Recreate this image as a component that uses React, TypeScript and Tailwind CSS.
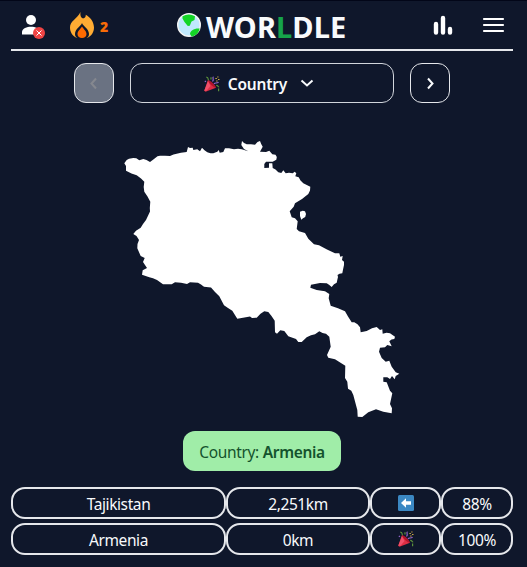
const ARMENIA =
  "M124.3 163.3L126.7 160 129 158.700 133.3 158 136.300 158.300 139.3 160.3 143.3 159 146.500 160 150 162 154 159 157.500 156.200 160 155.7 165 155.700 170 156 173.500 154.500 176.7 153.7 181 152.700 186.7 152 188 147 190 148 192.7 147.7 193.3 150 197.3 149.3 200 151.3 202 147.7 204.500 150.300 207.3 152.3 210.500 153.300 213.3 153.3 217.3 151.7 218.7 150 219.7 152.7 223.3 152 225 148.3 229 148.300 234 149.3 238 148.800 241.7 149.3 248.3 151.3 244 149 241.3 145 242 141 244 143 246.7 144.3 251 144.300 255 144.7 257.500 142 260 141 261.200 144 262.7 146.7 260 151.7 266 152 269.3 150.7 272.3 154.3 275.500 154.700 276.800 157 276.3 159.7 272.7 161.7 266 161.7 264.3 164 264.3 168 269 167.7 269 163.3 272.3 163.3 272.7 168 275.500 169.500 278.3 172.3 281.3 173 283.3 170.3 285.7 173.3 289 172.800 292.7 173.3 294.7 171.7 296.3 173.3 295.3 176.3 298.7 177.3 300.500 180.500 303.3 183.3 310.3 186.7 310 190.500 308.3 194 302 199 295 203.3 293.7 206.7 289.7 211.3 291.7 217.3 295 218.3 297.7 221.3 296.7 229 299 231.3 305 233 308.3 238.7 314 244.3 319 245.3 327 249.500 335 253.3 339.3 253.3 340.3 256.7 342.7 256 342 260 344 261.7 344 265 343.3 268.3 342.3 273.3 339.500 273.700 337.5 275 338 277 337.500 279 336.7 282.7 334 284.200 331.7 287 329 284.800 326.7 283.3 320 283 311 284.7 310.3 287.7 316.7 290 325 291.3 329.3 294 328.7 298.3 330.7 305.7 338 308.300 345 311.3 348 316.500 351.7 322.3 354.3 322.3 357.500 324.300 360 327.3 360.7 332.3 366.7 331 372 328.300 376.7 327 380 330 382.3 329.3 382.7 333.7 386.500 332.700 390 333.3 395 336.7 394.3 339 391.500 339.500 389.3 341.3 391.7 346.3 387.3 345 385 347.3 380 347.7 379 351.7 381.7 358 385.7 361.7 389.3 360.7 391.7 366.7 395.7 372.3 399.3 373.7 395.7 376 394.7 379.3 392 376 390 379 387.3 377.3 383.3 377.3 383.3 381.7 386.7 382.3 390 390.7 392.3 393.3 390 404 392 408.3 391.7 413.3 383.3 411.7 376 409.3 368.3 412.3 362.3 417 357.7 416.7 357.3 410 353.3 395 351.3 390.7 348 388.7 347.3 381.7 345 378 345.3 365.7 335 359.3 328.3 357.7 327 355 330.7 346.7 329.3 336.7 326 333.7 322.500 333 319.3 331.3 315 334.3 311 335.300 306.7 337.3 301.7 342 298.3 342 296 339 288.3 336.3 284.3 331 280.3 330.3 277 333.7 275 332.3 274.7 320.7 271.500 316 268.3 312 264.3 311.3 260.500 313.700 256.7 317.7 252 318 250 316.500 243 317.700 237.3 318.7 232.3 310.7 228 308 224 305.3 219.300 296.300 215 292 211 287.500 204 286.700 201 284.500 198 282.700 190 282.300 187 284 181 282.800 175 282.300 171.700 284.300 163 284.300 157 280 153 278.300 149.3 277.3 142 274.7 142.7 270.3 147 268 143 262 144.7 258 140.7 256 137.3 248.3 137.500 244 139 240 136.500 236 133.3 234 136 230.7 140.7 227.7 143 224 146 220 150 211.500 149.800 208 150.3 201.7 147.500 196.500 144.3 191.7 143.700 187 144.3 181.7 141 178.500 136.7 175.3 131.500 173.500 126 170.7 126 166ZM300 211.7L302.7 210.7 305 211.300 306 214 305.200 217 303 218.200 301.3 219.7 300 216Z";

function Popper({ className }: { className: string }) {
  return (
    <svg viewBox="0 0 16 16" className={className}>
      <path d="M4 4 12 11.8 1.5 15.800 0.2 14.800Z" fill="#dd2e44" />
      <path d="M4 5 6.500 10 2.500 14.800 0.3 14.800Z" fill="#f0506a" />
      <path d="M4 4C6 4 12 9.500 12 11.800 9.500 12 4.500 7 4 4Z" fill="#b3142c" />
      <path d="M2.300 1.200C5 1.500 3.500 3 4.600 4.200M12.200 9.500c1.800-.4 1.500 1.600 3 1.500M14.600 12.500v2.700M7 1.200v2.300" fill="none" stroke="#5c913b" strokeWidth="1.200" />
      <path d="M9.500.8c-1.800 1 1.200 2.400-1 4.700M.8 5l1.200.8M10 7.800c1-1.400 2.600-.2 4.600-1.500" fill="none" stroke="#9266cc" strokeWidth="1.200" />
      <path d="M11.500 2.500h1.200M14.200 3.500h1.200M12.300 5h1.200M13.400 1h1" stroke="#ffcc4d" strokeWidth="1.200" />
    </svg>
  );
}

function Header() {
  return (
    <header className="mx-[11px] flex h-[50px] w-[502px] items-center border-b-2 border-gray-200">
      <div className="flex w-[165px] items-center">
        <svg viewBox="0 0 26 26" className="ml-[9px] mt-[3px] h-[26px] w-[26px] shrink-0">
          <circle cx="11" cy="6" r="5" fill="#fff" />
          <path d="M2 20.500v-2.500c0-3.500 5-5.300 9-5.300s9 1.800 9 5.300v2.500Z" fill="#fff" />
          <circle cx="19" cy="19" r="6" fill="#ef4444" />
          <path d="m16.5 16.5 5 5m0-5-5 5" stroke="#fff" strokeWidth="1" />
        </svg>
        <svg viewBox="0 0 24 26" className="ml-[24px] h-[26px] w-6 shrink-0">
          <path d="M10.5 0C10 4 11 5.500 13 6.500 15 6.300 15.800 5 15.800 2.800 20 5 24 10 24 15.500 24 20 21.500 24 17.500 25.700L6.500 25.700C2.500 24 0 20 0 15.500 0 9 7 7 10.500 0Z" fill="#ffac33" />
          <path d="M12 11c-1 3-7 6-7 11 0 2 1 3.400 2.500 4h9c1.500-.6 2.500-2 2.500-4 0-5-6-8-7-11Z" fill="#0f172a" />
          <path d="M12 14.500c-1 2-4.500 4.500-4.500 7.500 0 2.500 2 4 4.500 4s4.500-1.500 4.500-4c0-3-3.500-5.500-4.500-7.500Z" fill="#ff6b00" />
        </svg>
        <span className="ml-[6px] pt-[2px] text-[14px] font-black text-[#f76b08]">2</span>
      </div>
      <h1 className="flex h-full items-center text-[29px] font-bold text-slate-50">
        <svg viewBox="0 0 26 26" className="mr-[4px] h-[26px] w-[26px] shrink-0">
          <circle cx="13" cy="13" r="11.300" fill="#bfe8fd" stroke="#f5f5f5" strokeWidth="1.400" />
          <path d="M6.500 4.200Q13 .8 19 4.300L18.500 8 15.500 9.500 13.800 13.700 11.800 14 8.500 10 6.500 6.500Z" fill="#13d526" />
          <path d="M23.700 16.500C18 16 14 19 14 22l1.500 2.500C20 24 23 20 23.700 16.500Z" fill="#13d526" />
        </svg>
        <span className="w-[142px] whitespace-nowrap pt-[3px] tracking-[0.1px]">WOR<span className="text-[#16a34a]">L</span>DLE</span>
      </h1>
      <svg viewBox="0 0 80 30" className="ml-auto mr-[8px] h-[30px] w-[80px] shrink-0" stroke="#fff" strokeLinecap="round">
        <path d="M11 14v8.500M18 8v14.500M25 19v3.500" strokeWidth="4.400" />
        <path d="M59 9h19M59 15h19M59 21h19" strokeWidth="2.200" />
      </svg>
    </header>
  );
}

function Arrow({ d, className }: { d: string; className: string }) {
  return (
    <svg viewBox="0 0 16 16" className={className} fill="none" strokeWidth="2">
      <path d={d} stroke="currentColor" />
    </svg>
  );
}

const guesses = [
  { name: "Tajikistan", distance: "2,251km", percent: "88%", won: false },
  { name: "Armenia", distance: "0km", percent: "100%", won: true },
];
const cell = "flex items-center justify-center rounded-[14px] border-2 border-gray-200 pt-[3px]";

export default function App() {
  return (
    <main className="h-[567px] w-[527px] overflow-hidden border-t border-slate-950 bg-slate-900 font-['Noto_Sans',sans-serif] text-slate-50">
      <Header />
      <nav className="mt-3 flex justify-center gap-4 pr-[3px]">
        <button className="flex h-10 w-10 items-center justify-center rounded-xl border border-gray-200 bg-gray-500">
          <Arrow d="M10 3.500 5.500 8.500 10 13.500" className="h-4 w-4 text-[#85888f]" />
        </button>
        <button className="flex h-10 w-[264px] items-center justify-center rounded-xl border border-gray-300 pr-[5px] text-[15.5px] font-semibold">
          <Popper className="mr-2 mt-[2px] h-4 w-4" />
          <span className="pt-[3px] tracking-[-0.2px]">Country</span>
          <Arrow d="m2.500 5.500 5.500 5L13.500 5.500" className="ml-[12px] h-4 w-4" />
        </button>
        <button className="flex h-10 w-10 items-center justify-center rounded-xl border border-gray-200">
          <Arrow d="m6 3.500 4.500 5L6 13.500" className="h-4 w-4" />
        </button>
      </nav>
      <svg viewBox="110 130 300 300" className="ml-[110px] mt-[27px] h-[300px] w-[300px]">
        <path d={ARMENIA} fill="#fff" />
      </svg>
      <div className="ml-[183px] mt-[1px] flex h-10 w-[158px] items-center justify-center gap-1 rounded-xl bg-[#a0eda8] pt-[3px] text-[15.5px] tracking-[-0.35px] text-[#14532d]">
        Country: <b className="font-semibold">Armenia</b>
      </div>
      <section className="ml-[11px] mt-4 grid w-[502px] gap-1 text-[15.5px] tracking-[-0.4px]">
        {guesses.map((g) => (
          <div key={g.name} className="grid h-8 grid-cols-[215px_144px_71px_72px]">
            <div className={cell}>{g.name}</div>
            <div className={cell}>{g.distance}</div>
            <div className={cell}>
              {g.won ? (
                <Popper className="mb-[3px] h-4 w-4" />
              ) : (
                <svg viewBox="0 0 16 16" className="mb-[3px] h-4 w-4">
                  <rect width="16" height="16" rx="1.500" fill="#3b88c3" />
                  <path d="M3 8 8 3.200V6.300H13V9.700H8v3.100Z" fill="#fff" />
                </svg>
              )}
            </div>
            <div className={cell}>{g.percent}</div>
          </div>
        ))}
      </section>
    </main>
  );
}
